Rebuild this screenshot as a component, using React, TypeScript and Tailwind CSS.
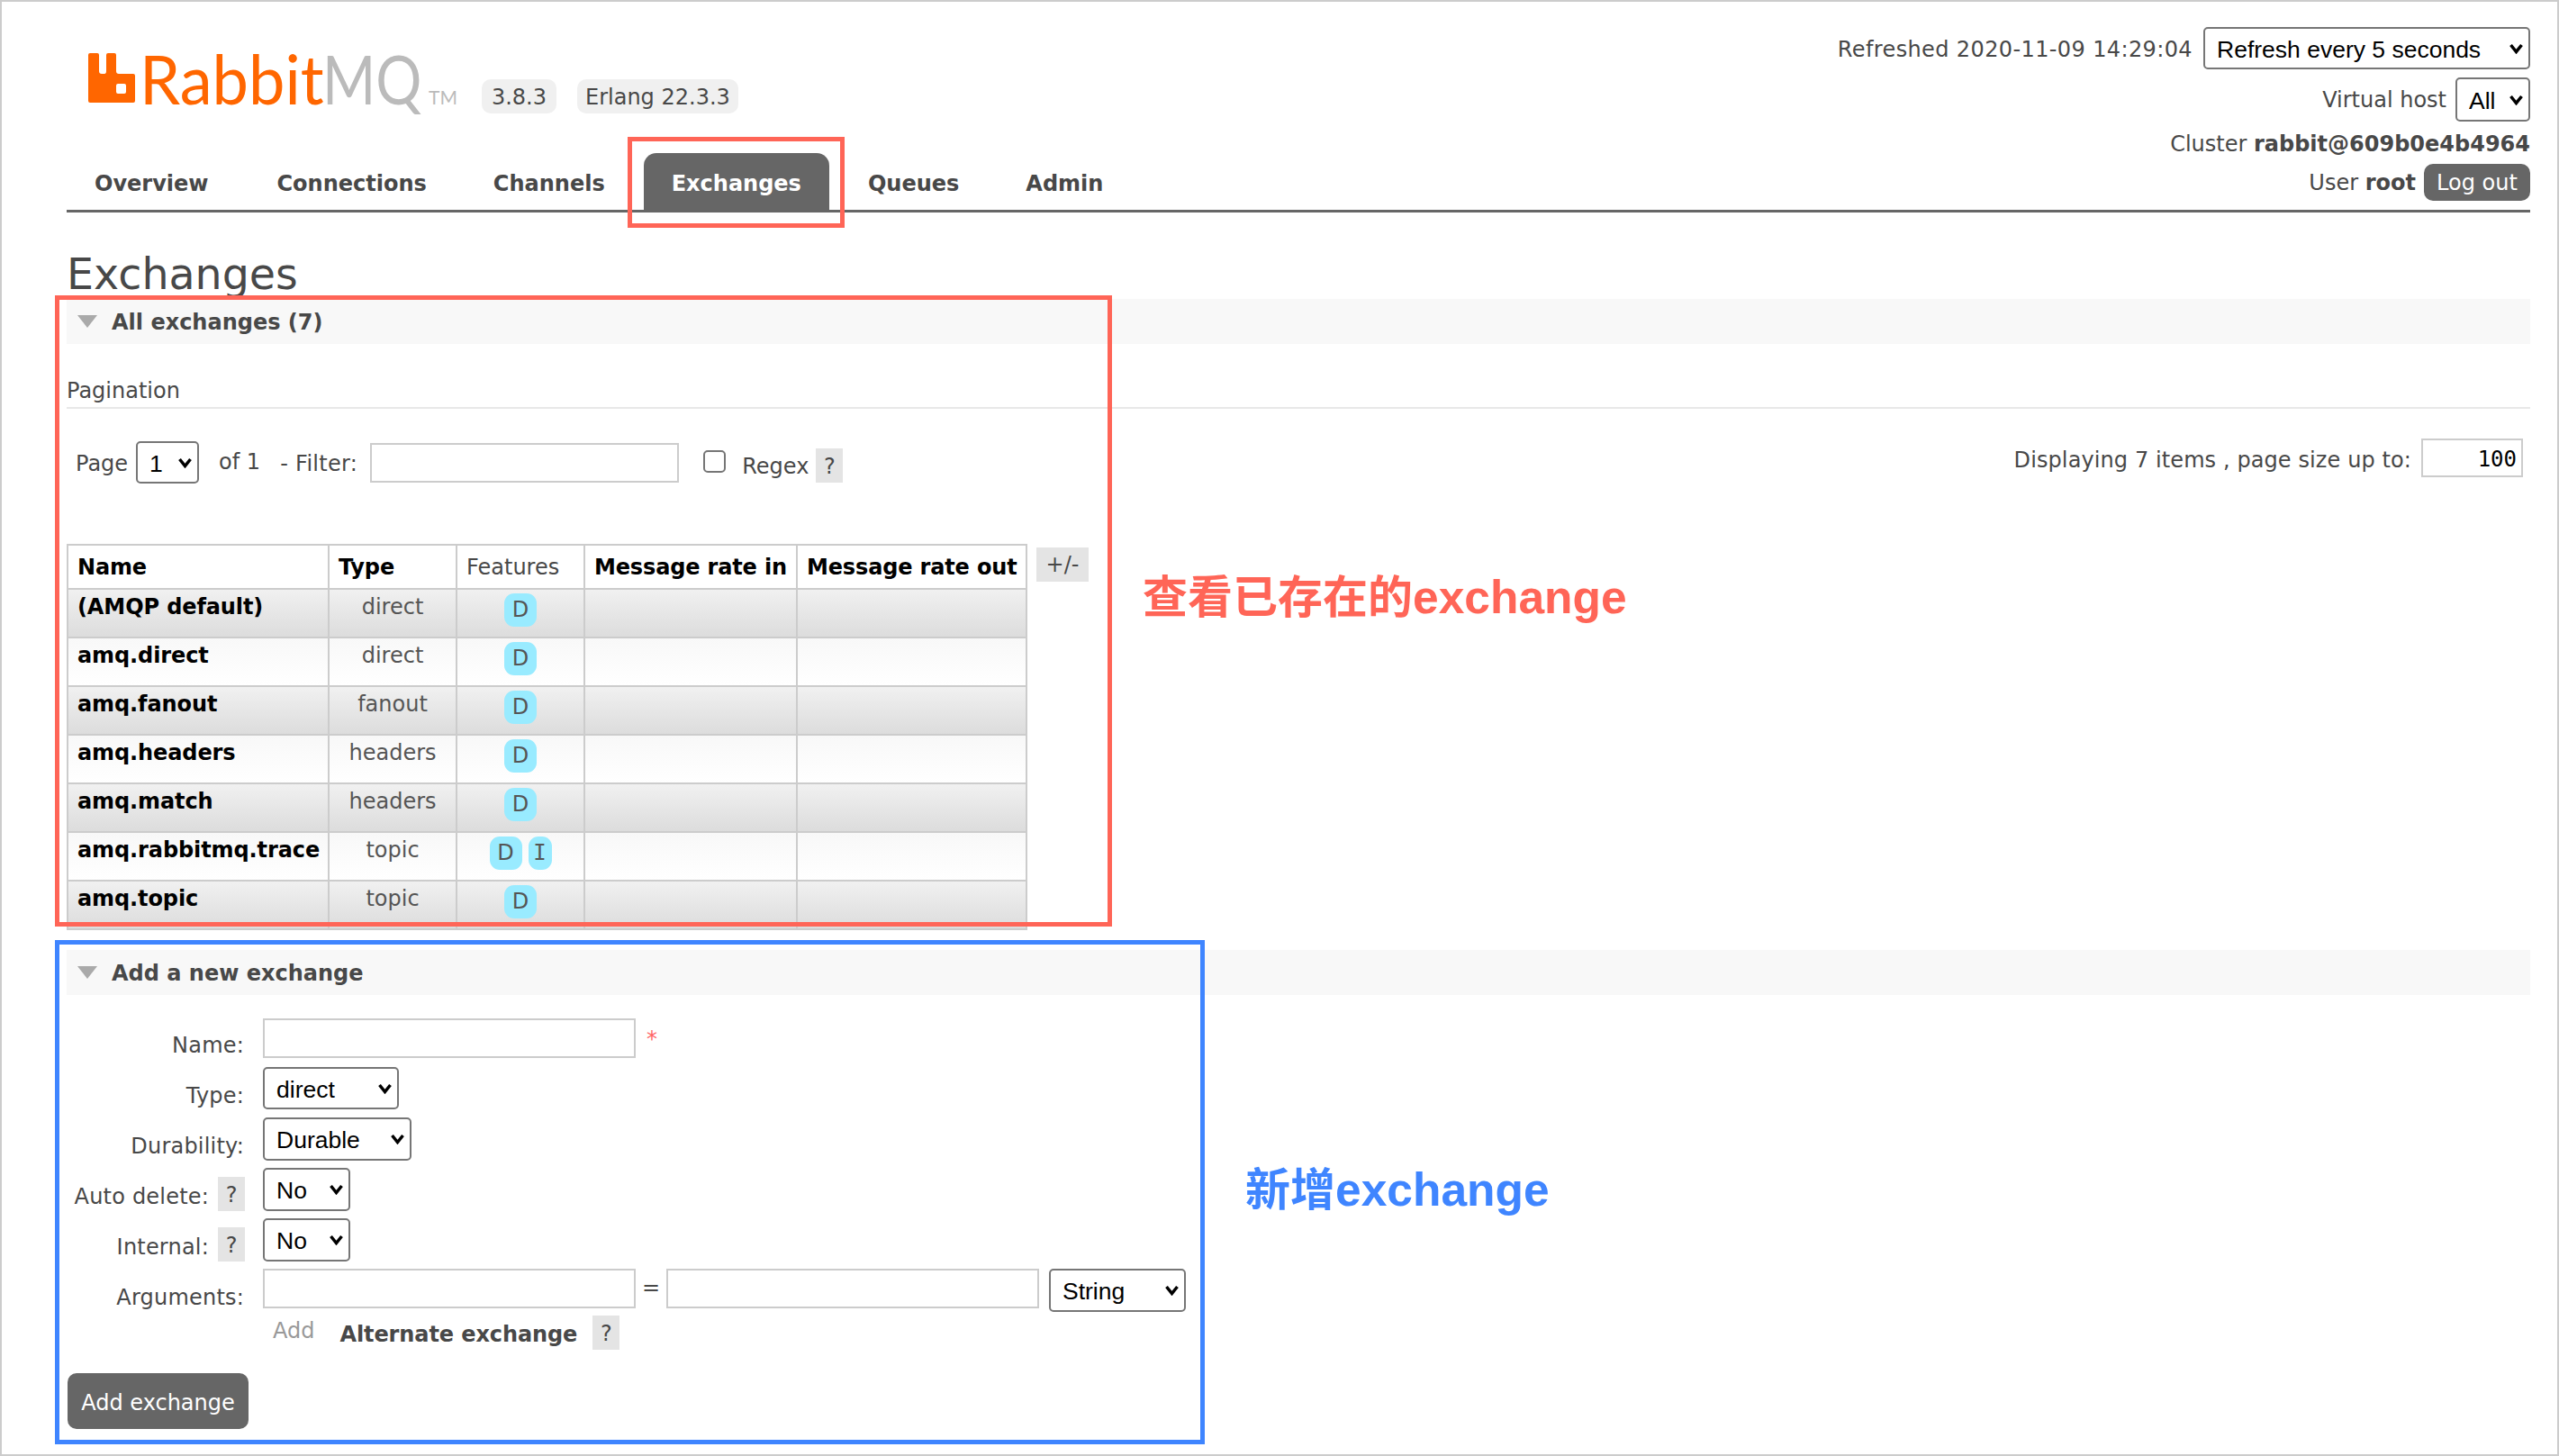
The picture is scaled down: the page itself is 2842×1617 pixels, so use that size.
import React from 'react';

const rows = [
  { name: '(AMQP default)', type: 'direct', features: ['D'] },
  { name: 'amq.direct', type: 'direct', features: ['D'] },
  { name: 'amq.fanout', type: 'fanout', features: ['D'] },
  { name: 'amq.headers', type: 'headers', features: ['D'] },
  { name: 'amq.match', type: 'headers', features: ['D'] },
  { name: 'amq.rabbitmq.trace', type: 'topic', features: ['D', 'I'] },
  { name: 'amq.topic', type: 'topic', features: ['D'] },
];

const tabs = ['Overview', 'Connections', 'Channels', 'Exchanges', 'Queues', 'Admin'];

const Select = ({ value, className }: { value: string; className: string }) => (
  <div className={`relative shrink-0 ${className}`}>
    <select
      defaultValue={value}
      className="h-full w-full appearance-none rounded-[5px] border-2 border-[#767676] bg-white pt-[2px] pl-[13px] font-['Liberation_Sans',sans-serif] text-[26.5px] text-black outline-none"
    >
      <option>{value}</option>
    </select>
    <svg viewBox="0 0 15 12" className="pointer-events-none absolute top-1/2 right-[8px] h-[12px] w-[15px] -translate-y-1/2">
      <path d="M1.5 2 L7.5 9.5 L13.5 2" fill="none" stroke="#000" strokeWidth="3.5" />
    </svg>
  </div>
);

const Help = ({ className = '' }: { className?: string }) => (
  <span className={`flex h-[38px] w-[30px] shrink-0 items-center justify-center bg-[#e4e4e4] pt-[2px] text-[#484848] ${className}`}>?</span>
);

const SectionHeader = ({ title }: { title: string }) => (
  <div className="flex h-[50px] items-center bg-[#f8f8f8] pl-[12px] font-bold text-[#484848]">
    <svg viewBox="0 0 22 14" className="mr-[16px] h-[14px] w-[22px]">
      <path d="M0 0 H22 L11 14 Z" fill="#aaa" />
    </svg>
    <span className="pt-[2px]">{title}</span>
  </div>
);

const FormRow = ({ label, help, children }: { label: string; help?: boolean; children: React.ReactNode }) => (
  <div className="flex h-[56px] items-start">
    <div className="flex w-[198px] shrink-0 items-start justify-end">
      {help ? (
        <>
          <span className="pt-[17px] tracking-[0.2px] text-[#484848]">{label}</span>
          <Help className="mt-[10px] ml-[10px]" />
        </>
      ) : (
        <span className="pt-[17px] pr-[1px] tracking-[0.2px] text-[#484848]">{label}</span>
      )}
    </div>
    <div className="ml-[20px] flex items-start">{children}</div>
  </div>
);

const Logo = () => (
  <div className="flex items-start">
    <svg viewBox="0 0 52 55" className="ml-[24px] h-[55px] w-[52px] shrink-0">
      <path
        fillRule="evenodd"
        fill="#f60"
        d="M2 0 H10 Q12 0 12 2 V20 Q12 23 15 23 H18 Q20 23 20 20 V2 Q20 0 22 0 H29 Q31 0 31 2 V20 Q31 23 34 23 H50 Q52 23 52 25 V53 Q52 55 50 55 H2 Q0 55 0 53 V2 Q0 0 2 0 Z M33 34 Q31 34 31 36 V43 Q31 45 33 45 H40 Q42 45 42 43 V36 Q42 34 40 34 Z"
      />
    </svg>
    <span className="-mt-[15px] ml-[5px] inline-block h-[85px] w-[203px] origin-left scale-x-[0.95] font-['Lato',sans-serif] text-[76px] leading-[85px] font-normal whitespace-nowrap text-[#f60]">
      Rabbit
    </span>
    <span className="-mt-[15px] inline-block h-[85px] w-[112px] origin-left scale-x-[0.84] font-['Lato',sans-serif] text-[76px] leading-[85px] font-normal whitespace-nowrap text-[#bbb]">
      MQ
    </span>
    <span className="mt-[37px] ml-[6px] font-['Lato',sans-serif] text-[21px] leading-[24px] text-[#bbb]">TM</span>
  </div>
);

export default function App() {
  return (
    <div className="relative h-[1617px] w-[2842px] overflow-hidden border-2 border-[#ccc] bg-white font-['DejaVu_Sans',sans-serif] text-[24px] leading-[30px] text-[#484848]">
      <div className="pr-[30px] pl-[72px]">
        <header className="flex justify-between border-b-[3px] border-[#666]">
          <div>
            <div className="mt-[57px] flex h-[55px] items-start">
              <Logo />
              <span className="mt-[29px] ml-[27px] flex h-[38px] items-center rounded-[10px] bg-[#f0f0f0] px-[11px] pt-[2px]">3.8.3</span>
              <span className="mt-[29px] ml-[23px] flex h-[38px] items-center rounded-[10px] bg-[#f0f0f0] px-[9px] pt-[2px]">Erlang 22.3.3</span>
            </div>
            <nav className="mt-[56px] flex gap-[12px]">
              {tabs.map((tab) => (
                <span
                  key={tab}
                  className={
                    tab === 'Exchanges'
                      ? 'flex h-[63px] items-start rounded-t-[14px] bg-[#666] px-[31px] pt-[19px] font-bold text-white'
                      : 'flex h-[63px] items-start px-[31px] pt-[19px] font-bold text-[#484848] first:mr-[2px]'
                  }
                >
                  {tab}
                </span>
              ))}
            </nav>
          </div>
          <div className="flex flex-col items-end pt-[28px]">
            <div className="flex items-center">
              <span className="pt-[2px] tracking-[0.38px]">Refreshed 2020-11-09 14:29:04</span>
              <Select value="Refresh every 5 seconds" className="ml-[12px] h-[47px] w-[363px]" />
            </div>
            <div className="mt-[9px] flex items-center">
              <span>Virtual host</span>
              <Select value="All" className="ml-[10px] h-[49px] w-[83px]" />
            </div>
            <div className="mt-[10px]">
              Cluster <b>rabbit@609b0e4b4964</b>
            </div>
            <div className="mt-[7px] flex items-center">
              <span>
                User <b>root</b>
              </span>
              <span className="ml-[9px] flex h-[41px] w-[118px] items-center justify-center rounded-[10px] bg-[#666] text-white">Log out</span>
            </div>
          </div>
        </header>

        <h1 className="mt-[42px] text-[47.5px] leading-[54px] font-normal">Exchanges</h1>

        <SectionHeader title="All exchanges (7)" />

        <div className="flex h-[72px] items-end border-b-2 border-[#e8e8e8] pb-[3px]">Pagination</div>

        <div className="mt-[33px] flex h-[50px] items-start justify-between">
          <div className="flex items-start text-[#484848]">
            <span className="mt-[13px] ml-[10px]">Page</span>
            <Select value="1" className="mt-[3px] ml-[9px] h-[47px] w-[70px]" />
            <span className="mt-[11px] ml-[22px]">of 1</span>
            <span className="mt-[13px] ml-[22px] tracking-[0.3px]">- Filter:</span>
            <input className="mt-[5px] ml-[14px] h-[44px] w-[343px] border-2 border-[#ccc] bg-white" />
            <input type="checkbox" className="mt-[13px] ml-[27px] h-[25px] w-[25px] appearance-none rounded-[5px] border-2 border-[#767676] bg-white" />
            <span className="mt-[16px] ml-[18px]">Regex</span>
            <Help className="mt-[11px] ml-[8px]" />
          </div>
          <div className="flex items-start pr-[8px]">
            <span className="mt-[9px] tracking-[0.1px]">Displaying 7 items , page size up to:</span>
            <input
              defaultValue="100"
              className="ml-[11px] h-[43px] w-[113px] border-2 border-[#ccc] bg-white pt-[2px] pr-[5px] text-right font-['DejaVu_Sans_Mono',monospace] text-[24px] text-black"
            />
          </div>
        </div>

        <div className="mt-[67px] flex items-start">
          <table className="w-[1065px] table-fixed border-collapse">
            <colgroup>
              <col className="w-[290px]" />
              <col className="w-[142px]" />
              <col className="w-[142px]" />
              <col className="w-[236px]" />
              <col className="w-[255px]" />
            </colgroup>
            <thead>
              <tr className="h-[49px] text-left text-black">
                <th className="border-2 border-[#ccc] pl-[10px] font-bold tracking-[-0.15px]">Name</th>
                <th className="border-2 border-[#ccc] pl-[10px] font-bold tracking-[-0.15px]">Type</th>
                <th className="border-2 border-[#ccc] pl-[10px] font-normal text-[#484848]">Features</th>
                <th className="border-2 border-[#ccc] pl-[10px] font-bold tracking-[-0.15px]">Message rate in</th>
                <th className="border-2 border-[#ccc] pl-[10px] font-bold tracking-[-0.15px]">Message rate out</th>
              </tr>
            </thead>
            <tbody>
              {rows.map((row, index) => (
                <tr
                  key={row.name}
                  className={
                    index % 2 === 0
                      ? 'h-[54px] bg-gradient-to-b from-[#f1f1f1] to-[#dcdcdc]'
                      : 'h-[54px] bg-gradient-to-b from-[#f8f8f8] to-[#ffffff]'
                  }
                >
                  <td className="border-2 border-[#ccc] pb-[15px] pl-[10px] font-bold tracking-[-0.1px] whitespace-nowrap text-black">{row.name}</td>
                  <td className="border-2 border-[#ccc] pb-[15px] text-center text-[#555]">{row.type}</td>
                  <td className="border-2 border-[#ccc] pb-[8px]">
                    <div className="flex justify-center gap-[7px]">
                      {row.features.map((f) => (
                        <span
                          key={f}
                          className={
                            f === 'I'
                              ? "flex h-[37px] w-[26px] items-center justify-center rounded-[11px] bg-[#99ebff] font-['DejaVu_Sans_Mono',monospace] text-[#555]"
                              : 'flex h-[37px] w-[36px] items-center justify-center rounded-[11px] bg-[#99ebff] text-[#555]'
                          }
                        >
                          {f}
                        </span>
                      ))}
                    </div>
                  </td>
                  <td className="border-2 border-[#ccc]" />
                  <td className="border-2 border-[#ccc]" />
                </tr>
              ))}
            </tbody>
          </table>
          <span className="mt-[4px] ml-[10px] flex h-[38px] w-[58px] items-center justify-center bg-[#e4e4e4]">+/-</span>
        </div>

        <div className="mt-[22px]">
          <SectionHeader title="Add a new exchange" />
        </div>

        <div className="mt-[24px]">
          <FormRow label="Name:">
            <input className="mt-[2px] h-[44px] w-[414px] border-2 border-[#ccc] bg-white" />
            <span className="mt-[10px] ml-[12px] text-[#f66]">*</span>
          </FormRow>
          <FormRow label="Type:">
            <Select value="direct" className="h-[47px] w-[151px]" />
          </FormRow>
          <FormRow label="Durability:">
            <Select value="Durable" className="h-[48px] w-[165px]" />
          </FormRow>
          <FormRow label="Auto delete:" help>
            <Select value="No" className="h-[48px] w-[97px]" />
          </FormRow>
          <FormRow label="Internal:" help>
            <Select value="No" className="h-[48px] w-[97px]" />
          </FormRow>
          <div className="h-[52px]">
            <FormRow label="Arguments:">
              <input className="h-[44px] w-[414px] border-2 border-[#ccc] bg-white" />
              <span className="mt-[6px] w-[34px] text-center">=</span>
              <input className="h-[44px] w-[414px] border-2 border-[#ccc] bg-white" />
              <Select value="String" className="ml-[11px] h-[48px] w-[152px]" />
            </FormRow>
          </div>
          <div className="ml-[229px] flex items-start">
            <span className="pt-[2px] text-[#999]">Add</span>
            <span className="mt-[6px] ml-[28px] font-bold tracking-[-0.1px]">Alternate exchange</span>
            <Help className="ml-[17px] w-[28px] text-[#999]" />
          </div>
        </div>

        <button className="mt-[26px] ml-[1px] h-[62px] w-[201px] rounded-[10px] bg-[#666] pt-[3px] text-white">Add exchange</button>
      </div>

      <div className="absolute top-[150px] left-[695px] h-[101px] w-[241px] border-[5px] border-[#ff6557]" />
      <div className="absolute top-[326px] left-[59px] h-[701px] w-[1174px] border-[5px] border-[#ff6557]" />
      <div className="absolute top-[1042px] left-[59px] h-[560px] w-[1277px] border-[5px] border-[#3f85ff]" />
      <span className="absolute top-[629px] left-[1267px] font-['Liberation_Sans','Noto_Sans_CJK_SC',sans-serif] text-[50px] leading-[64px] font-bold whitespace-nowrap text-[#ff6557]">
        查看已存在的<span className="text-[51.5px]">exchange</span>
      </span>
      <span className="absolute top-[1287px] left-[1381px] font-['Liberation_Sans','Noto_Sans_CJK_SC',sans-serif] text-[50px] leading-[64px] font-bold whitespace-nowrap text-[#3f85ff]">
        新增<span className="text-[51.5px]">exchange</span>
      </span>
    </div>
  );
}
